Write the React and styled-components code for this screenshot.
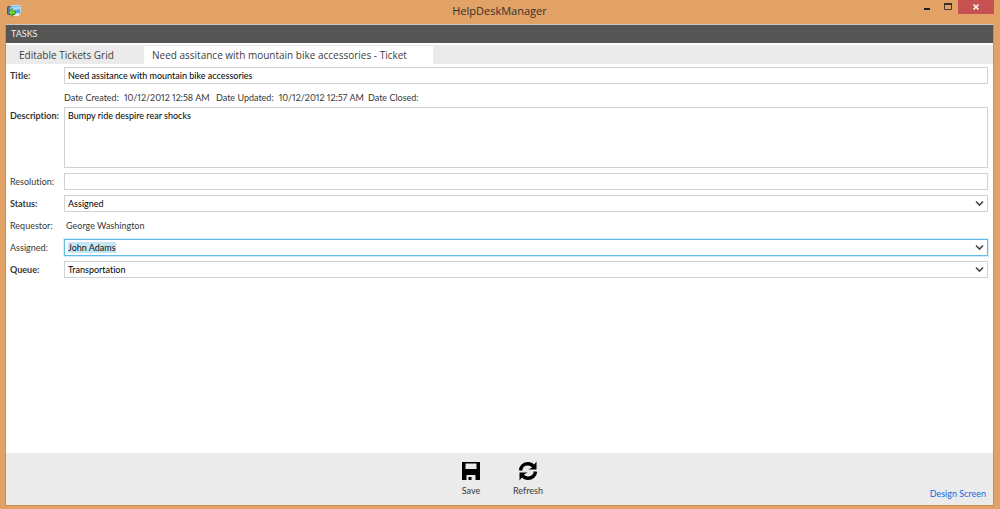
import React, { useEffect, useRef } from "react";
import styled, { createGlobalStyle, css } from "styled-components";

const Global = createGlobalStyle`
  *, *::before, *::after { box-sizing: border-box; }
  body { margin: 0; background: #e2a266; }
  body, button, input, select, textarea {
    font-family: Lato, "Open Sans", sans-serif;
    font-variant-ligatures: none;
  }
`;

const Window = styled.div`
  display: flex;
  flex-direction: column;
  min-height: 100vh;
  padding: 0 6px 3px 5px;
  background: #e2a266;
  color: #383838;
  font-size: 9px;
  line-height: 12px;
`;

const TitleBar = styled.header`
  display: grid;
  grid-template-columns: 1fr auto 1fr;
  height: 24px;
`;

const AppIcon = styled.svg`
  width: 14px;
  height: 12px;
  margin: 5px 0 0 2px;
`;

const WindowTitle = styled.h1`
  margin: 0;
  color: #33302c;
  font-family: "Open Sans", sans-serif;
  font-size: 11px;
  font-weight: 400;
  line-height: 22px;
`;

const WindowButtons = styled.div`
  display: flex;
  justify-content: flex-end;
  align-items: flex-start;
`;

const WindowButton = styled.button`
  display: flex;
  align-items: center;
  justify-content: center;
  width: ${(p) => (p.$close ? "36px" : "21px")};
  height: 14px;
  padding: 0;
  border: 0;
  background: ${(p) => (p.$close ? "#c75050" : "transparent")};
`;

const Client = styled.main`
  display: flex;
  flex: 1;
  flex-direction: column;
  border: 1px solid #c98d56;
  border-top-color: #c3cbc9;
  background: #fff;
`;

const SectionBar = styled.div`
  height: 18px;
  padding: 0 5px;
  background: #555;
  color: #eee;
  line-height: 18px;
`;

const Tabs = styled.nav`
  display: flex;
  height: 19px;
  margin-top: 2px;
  padding-top: 1px;
  background: #ebebeb;
`;

const Tab = styled.button`
  width: ${(p) => (p.$active ? "289px" : "138px")};
  padding: 0 8px 0 ${(p) => (p.$active ? "8px" : "13px")};
  border: 0;
  background: ${(p) => (p.$active ? "#fff" : "transparent")};
  color: #404040;
  font-family: "Open Sans", sans-serif;
  font-size: 10px;
  line-height: 18px;
  text-align: left;
  white-space: nowrap;
`;

const Form = styled.form`
  display: grid;
  grid-template-columns: 49px 1fr;
  gap: 5px;
  padding: 3px 5px 0 4px;
`;

const Label = styled.label`
  font-weight: ${(p) => (p.$required ? 700 : 400)};
  line-height: 18px;
  height: 17px;
  white-space: nowrap;
`;

const fieldBox = css`
  width: 100%;
  height: 17px;
  border: 1px solid #cfd3d5;
  border-radius: 0;
  background: #fff;
  color: #000;
  font-size: 9px;
  line-height: 15px;
  outline: 0;
`;

const TextField = styled.input`
  ${fieldBox}
  display: block;
  padding: 0 3px;
`;

const TextArea = styled.textarea`
  ${fieldBox}
  display: block;
  height: 61px;
  padding: 0 3px;
  resize: none;
`;

const Dates = styled.dl`
  display: flex;
  grid-column: 2;
  height: 13px;
  margin: 0;
  padding-top: 3px;
  font-variant-numeric: proportional-nums;
  white-space: nowrap;
`;

const DateItem = styled.div`
  display: flex;
  gap: 5px;
  min-width: 152px;

  dd { margin: 0; }
`;

const ReadOnly = styled.output`
  padding-left: 2px;
  line-height: 17px;
`;

const DropWrap = styled.div`
  display: flex;
  align-items: center;
  position: relative;
`;

const Select = styled.select`
  ${fieldBox}
  appearance: none;
  padding: 0 20px 0 3px;
`;

const ComboInput = styled.input`
  ${fieldBox}
  padding: 0 20px 0 3px;
  border-color: #62bce8;
  box-shadow: 0 0 0 1px #d3edfa;

  &::selection { background: #c5e6f5; color: #111; }
`;

const Arrow = styled.svg`
  position: absolute;
  right: 4px;
  width: 9px;
  height: 7px;
  pointer-events: none;
`;

const Footer = styled.footer`
  display: grid;
  grid-template-columns: 1fr auto 1fr;
  height: 52px;
  margin-top: auto;
  background: #ebebeb;
`;

const Actions = styled.div`
  display: flex;
  grid-column: 2;
  gap: 17px;
`;

const Action = styled.button`
  display: flex;
  flex-direction: column;
  align-items: center;
  gap: 4px;
  width: 40px;
  padding: 8px 0 0;
  border: 0;
  background: transparent;
  color: #383838;
  font-size: 9px;
  line-height: 12px;

  svg { width: 20px; height: 20px; }
`;

const DesignLink = styled.a`
  align-self: end;
  justify-self: end;
  padding: 0 7px 5px 0;
  color: #1469dc;
  text-decoration: none;
`;

const DropArrow = () => (
  <Arrow viewBox="0 0 9 7" aria-hidden="true">
    <path d="M1 1.5 4.5 5 8 1.5" fill="none" stroke="#444" strokeWidth="1.6" />
  </Arrow>
);

function DropDown({ id, value }) {
  return (
    <DropWrap>
      <Select id={id} defaultValue={value}>
        <option>{value}</option>
      </Select>
      <DropArrow />
    </DropWrap>
  );
}

function ComboBox({ id, value }) {
  const ref = useRef(null);
  useEffect(() => {
    ref.current.focus();
    ref.current.select();
  }, []);
  return (
    <DropWrap>
      <ComboInput id={id} ref={ref} role="combobox" aria-expanded="false" defaultValue={value} />
      <DropArrow />
    </DropWrap>
  );
}

export default function App() {
  return (
    <Window>
      <Global />
      <TitleBar>
        <AppIcon viewBox="0 0 14 12" aria-hidden="true">
          <rect x="0.5" y="1.5" width="9" height="8" rx="1" fill="#4a7fae" stroke="#3d5567" />
          <rect x="4" y="0.5" width="9.5" height="8" rx="0.8" fill="#4fa6e4" stroke="#b9dcf0" />
          <path d="M5 1.500h8v2.500L5 6z" fill="#a9d9f7" />
          <path d="M6 11h6l1-2H8z" fill="#dfe5e6" />
          <path d="M1.500 7.500 5.500 3.500v2.500h3v3h-3v2.500z" fill="#73d331" stroke="#2f7a1c" strokeWidth="0.6" />
        </AppIcon>
        <WindowTitle>HelpDeskManager</WindowTitle>
        <WindowButtons>
          <WindowButton type="button" aria-label="Minimize">
            <svg width="8" height="8" viewBox="0 0 8 8"><path d="M1 5h6v2H1z" fill="#222" /></svg>
          </WindowButton>
          <WindowButton type="button" aria-label="Maximize">
            <svg width="8" height="8" viewBox="0 0 8 8">
              <path d="M0.500 1h7v5.500h-7z" fill="none" stroke="#4b3a2a" />
              <path d="M0 0h8v2H0z" fill="#3a2f26" />
            </svg>
          </WindowButton>
          <WindowButton type="button" aria-label="Close" $close>
            <svg width="8" height="8" viewBox="0 0 8 8">
              <path d="M1.500 1.500l5 5M6.500 1.500l-5 5" stroke="#fff" strokeWidth="1.500" />
            </svg>
          </WindowButton>
        </WindowButtons>
      </TitleBar>
      <Client>
        <SectionBar>TASKS</SectionBar>
        <Tabs>
          <Tab type="button">Editable Tickets Grid</Tab>
          <Tab type="button" $active>Need assitance with mountain bike accessories - Ticket</Tab>
        </Tabs>
        <Form onSubmit={(e) => e.preventDefault()}>
          <Label htmlFor="title" $required>Title:</Label>
          <TextField id="title" defaultValue="Need assitance with mountain bike accessories" />
          <Dates>
            <DateItem><dt>Date Created:</dt><dd>10/12/2012 12:58 AM</dd></DateItem>
            <DateItem><dt>Date Updated:</dt><dd>10/12/2012 12:57 AM</dd></DateItem>
            <DateItem><dt>Date Closed:</dt><dd /></DateItem>
          </Dates>
          <Label htmlFor="description" $required>Description:</Label>
          <TextArea id="description" defaultValue="Bumpy ride despire rear shocks" />
          <Label htmlFor="resolution">Resolution:</Label>
          <TextField id="resolution" />
          <Label htmlFor="status" $required>Status:</Label>
          <DropDown id="status" value="Assigned" />
          <Label htmlFor="requestor">Requestor:</Label>
          <ReadOnly id="requestor">George Washington</ReadOnly>
          <Label htmlFor="assigned">Assigned:</Label>
          <ComboBox id="assigned" value="John Adams" />
          <Label htmlFor="queue" $required>Queue:</Label>
          <DropDown id="queue" value="Transportation" />
        </Form>
        <Footer>
          <Actions>
            <Action type="button">
              <svg viewBox="0 0 20 20" aria-hidden="true">
                <path fillRule="evenodd" d="M1 1h18v18H1zM4.500 2.500v5.500h11V2.500zM5.500 14v5h2v-3h3v3h4v-5z" fill="#000" />
              </svg>
              Save
            </Action>
            <Action type="button">
              <svg viewBox="0 0 20 20" aria-hidden="true">
                <path d="M2.500 9.500C2.800 5.500 6 2.800 10 2.800c2.200 0 4 .9 5.400 2.600" fill="none" stroke="#000" strokeWidth="3.400" />
                <path d="M18.500 0.500V8.500h-8l3.500-2z" fill="#000" />
                <path d="M17.500 10.500c-.3 4-3.500 6.700-7.500 6.700-2.200 0-4-.9-5.400-2.600" fill="none" stroke="#000" strokeWidth="3.400" />
                <path d="M1.500 19.500V11.500h8l-3.500 2z" fill="#000" />
              </svg>
              Refresh
            </Action>
          </Actions>
          <DesignLink href="#design">Design Screen</DesignLink>
        </Footer>
      </Client>
    </Window>
  );
}
